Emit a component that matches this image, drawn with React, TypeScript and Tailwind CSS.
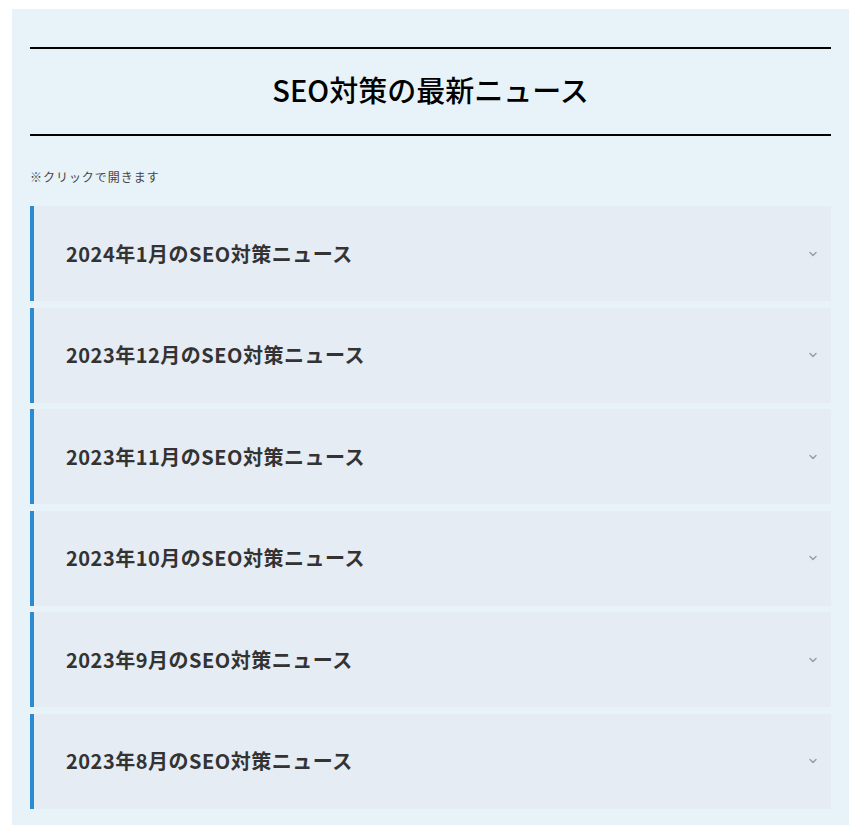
import { ChevronDown } from "lucide-react";

const months = [
  "2024年1月",
  "2023年12月",
  "2023年11月",
  "2023年10月",
  "2023年9月",
  "2023年8月",
];

function NewsItem({ label }: { label: string }) {
  return (
    <div className="flex h-[95px] items-center justify-between border-l-4 border-[#2b8bd1] bg-[#e5ecf3] pl-8 pr-3">
      <span className="text-[20px] font-bold tracking-[0.5px] text-[#333]">{label}のSEO対策ニュース</span>
      <ChevronDown className="h-3 w-3 text-[#9aa0a6]" strokeWidth={3} />
    </div>
  );
}

export default function App() {
  return (
    <div
      className="min-h-[832px] bg-white px-3 pt-[9px]"
      style={{ fontFamily: '"Noto Sans CJK JP", "Noto Sans", sans-serif' }}
    >
      <div className="w-[837px] bg-[#e7f2f9] px-[18px] pt-[38px] pb-4">
        <div className="flex h-[89px] items-center justify-center border-y-2 border-black pb-1">
          <h2 className="text-[29px] font-medium text-black">SEO対策の最新ニュース</h2>
        </div>
        <p className="mt-[32px] text-[12px] tracking-[0.08em] text-[#444]">※クリックで開きます</p>
        <div className="mt-[20px] flex flex-col gap-[6.5px]">
          {months.map((m) => (
            <NewsItem key={m} label={m} />
          ))}
        </div>
      </div>
    </div>
  );
}
